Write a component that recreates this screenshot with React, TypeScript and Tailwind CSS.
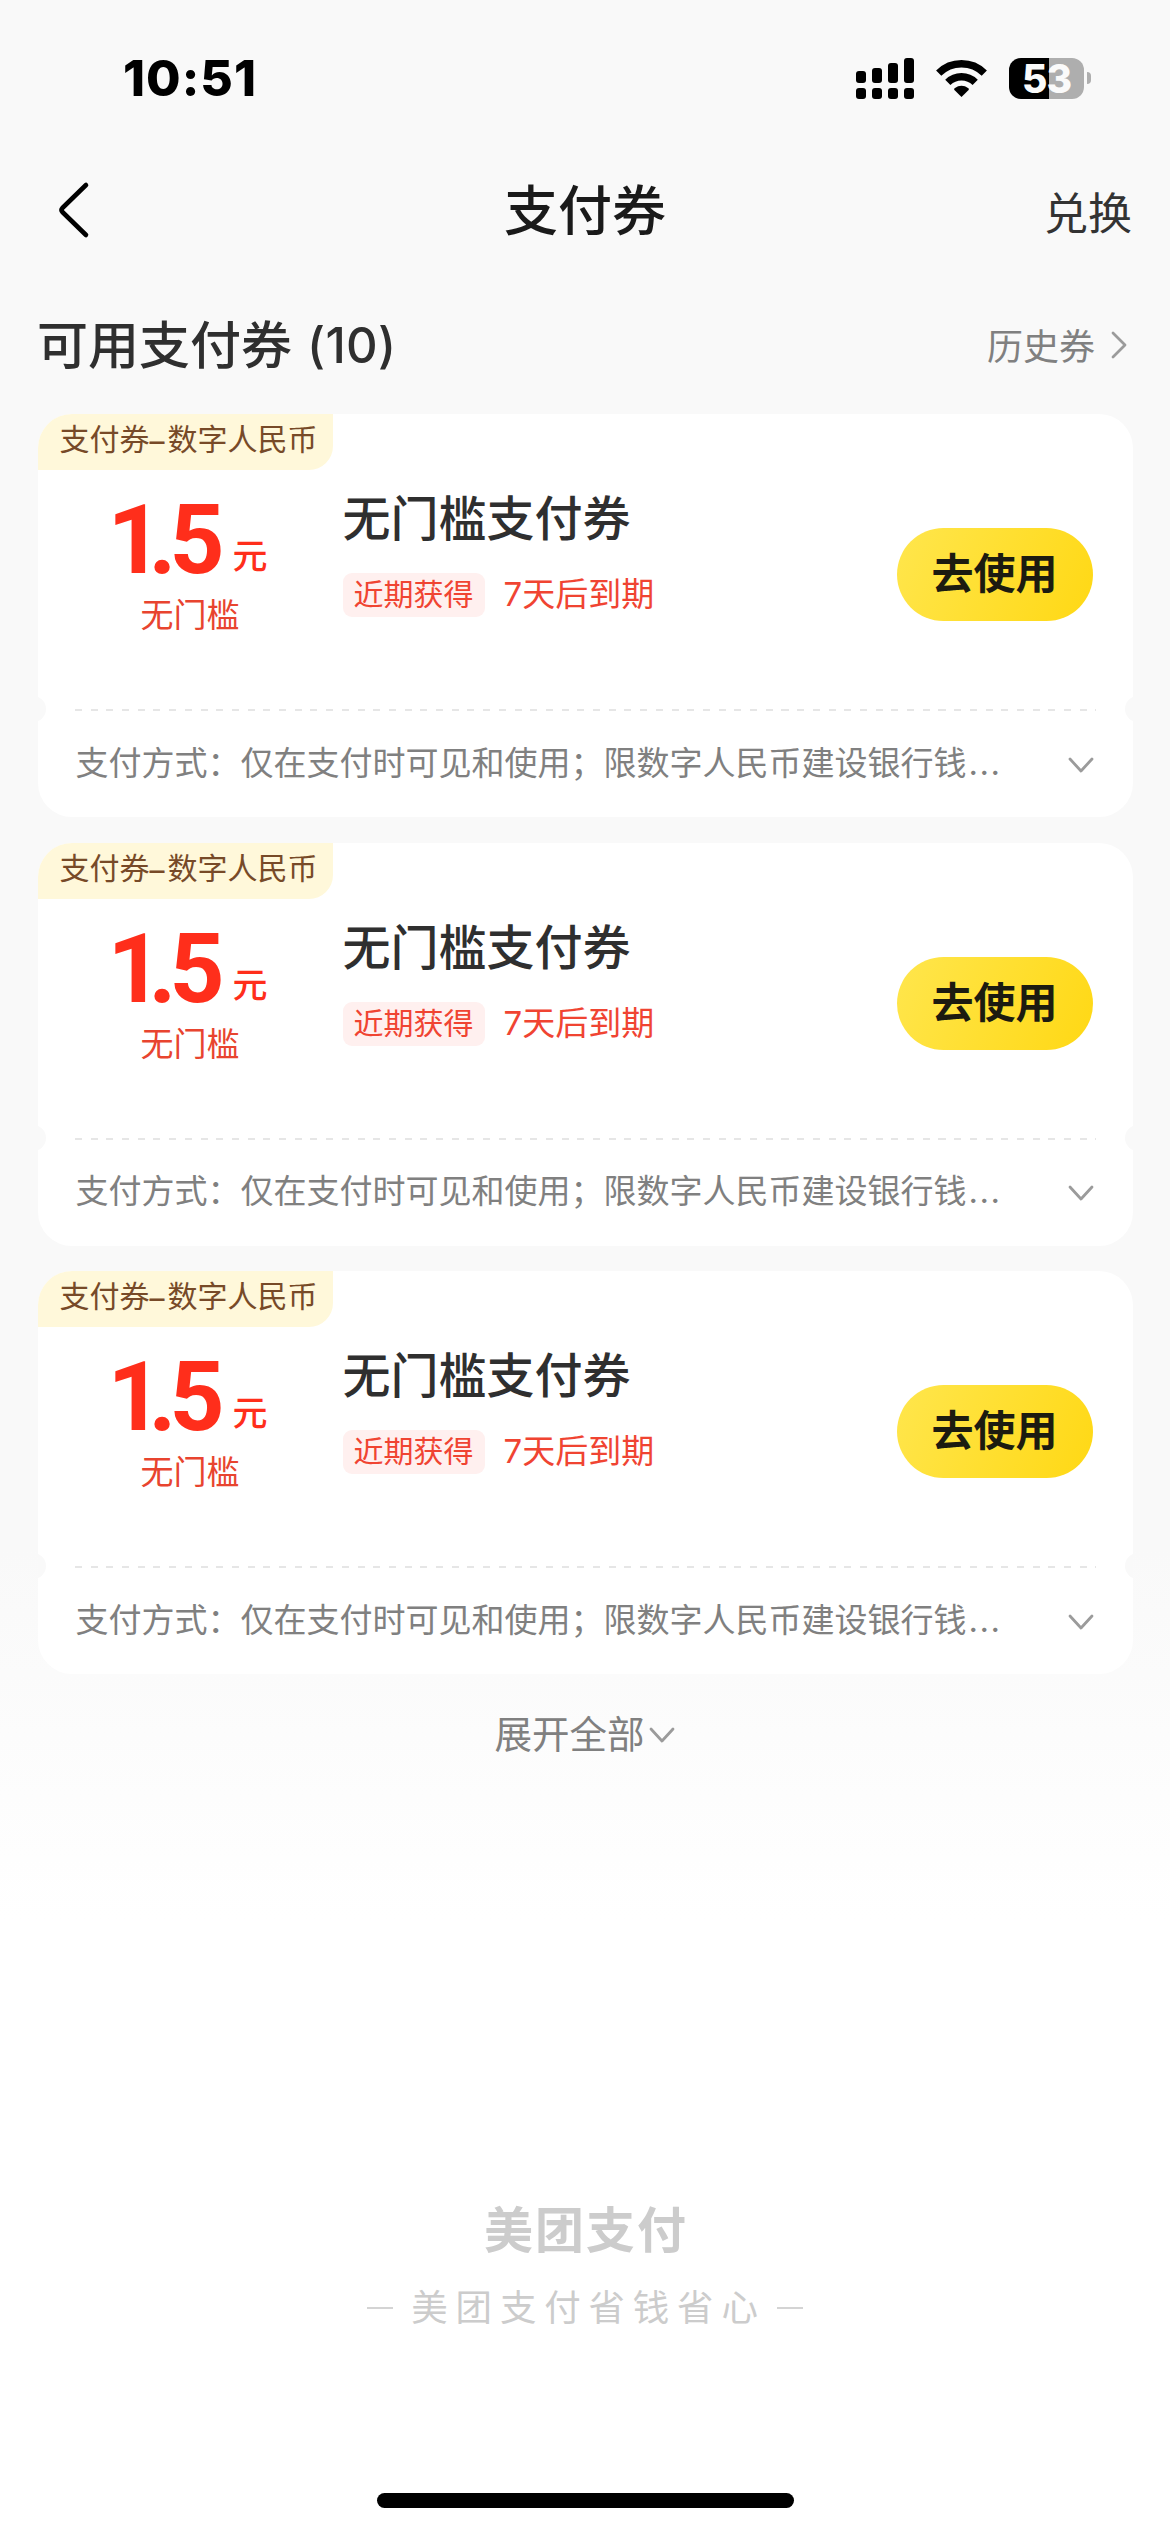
import React from "react";

const CJK = "font-['Noto_Sans_CJK_SC',sans-serif]";

interface Coupon {
  id: number;
  tag: string;
  title: string;
  badge: string;
  expiry: string;
}

const coupons: Coupon[] = [1, 2, 3].map((id) => ({
  id,
  tag: "数字人民币",
  title: "无门槛支付券",
  badge: "近期获得",
  expiry: "天后到期",
}));

function Signal() {
  const tops = [13, 10, 5, 0];
  return (
    <svg width="58" height="41" viewBox="0 0 58 41" fill="#000">
      {tops.map((t, i) => (
        <g key={i}>
          <rect x={i * 16} y={t} width="10" height={25 - t} rx="3" />
          <rect x={i * 16} y="30" width="10" height="11" rx="3" />
        </g>
      ))}
    </svg>
  );
}

function Wifi() {
  return (
    <svg width="51" height="37" viewBox="0 0 51 37" fill="none" stroke="#000" strokeWidth="7.4">
      <path d="M2.7 13.2 A32.4 32.4 0 0 1 48.3 13.2" />
      <path d="M11.8 22.3 A19.5 19.5 0 0 1 39.2 22.3" />
      <path d="M25.5 37 L18.4 29.9 Q17.6 29 18.6 28.2 Q25.5 23.4 32.4 28.2 Q33.4 29 32.6 29.9 Z" fill="#000" stroke="none" />
    </svg>
  );
}

function Battery() {
  return (
    <div className="flex items-center gap-[3px]">
      <div className="flex h-[41px] w-[75px] items-center justify-center rounded-[12px] bg-[linear-gradient(to_right,#000_40px,#aeaeae_40px)] font-['Inter',sans-serif] text-[39px] leading-[41px] font-extrabold text-[#fafafa]">
        <span className="tracking-[-1px]">53</span>
      </div>
      <div className="h-3 w-1 rounded-r-full bg-[#aeaeae]" />
    </div>
  );
}

function ChevronDown() {
  return (
    <svg width="26" height="16" viewBox="0 0 26 16" fill="none" stroke="#9b9b9b" strokeWidth="2.8" strokeLinecap="round" strokeLinejoin="round">
      <path d="M2 2 L13 14 L24 2" />
    </svg>
  );
}

function CouponCard({ c }: { c: Coupon }) {
  return (
    <article className="relative h-[403px] overflow-hidden rounded-[34px] bg-white">
      <div className="flex h-[56px] w-[295px] rounded-br-[24px] bg-[#fff8da] pl-[22px] text-[30px] leading-[47px] whitespace-nowrap text-[#774a28]">
        <span>支付券</span>
        <span className="w-[18px] overflow-visible font-['Inter',sans-serif] leading-[54px]">–</span>
        <span>{c.tag}</span>
      </div>
      <div className="flex h-[239px]">
        <div className="flex w-[305px] flex-col items-center text-[#ff2e1b]">
          <div className="mt-5 flex h-[98px] items-baseline pr-[5px]">
            <span className="font-['Roboto',sans-serif] text-[96px] leading-[100px] font-bold">
              <span className="tracking-[-14px]">1</span>
              <span className="tracking-[-7px]">.</span>
              <span className="tracking-[-10px]">5</span>
            </span>
            <span className="relative -top-[4px] ml-[18px] text-[35px] leading-10 font-medium">元</span>
          </div>
          <div className="mt-[2px] text-[33px] leading-[46px] text-[#e8442f]">无门槛</div>
        </div>
        <div className="flex flex-1 flex-col">
          <h3 className="mt-[17px] text-[48px] leading-[56px] font-medium text-[#2f2f2f]">{c.title}</h3>
          <div className="mt-[29px] flex items-center text-[#f04432]">
            <span className="h-[44px] rounded-[9px] bg-[#fff0ef] px-[11px] text-[30px] leading-[38px]">{c.badge}</span>
            <span className="ml-[19px] pb-[4px] text-[33px] leading-[40px]">
              <span className="font-['Inter',sans-serif]">7</span>
              {c.expiry}
            </span>
          </div>
        </div>
        <button className="mt-[58px] mr-[40px] h-[93px] w-[196px] rounded-full bg-[linear-gradient(115deg,#ffe64d,#ffd814)] pb-[7px] text-[42px] leading-[86px] font-bold text-[#1c1b10]">
          去使用
        </button>
      </div>
      <div className="mx-[37px] h-[2px] bg-[repeating-linear-gradient(to_right,#e6e6e6_0_7px,transparent_7px_15.7px)]" />
      <div className="absolute top-[282px] left-[-18px] size-[26px] rounded-full bg-[#f9f9f9]" />
      <div className="absolute top-[282px] right-[-18px] size-[26px] rounded-full bg-[#f9f9f9]" />
      <div className="flex h-[106px] items-center justify-between pr-[39px] pb-[3px] pl-[38px] text-[33px] leading-[46px] text-[#808080]">
        <p className="flex whitespace-nowrap">
          支付方式：仅在支付时可见和使用；限数字人民币建设银行钱
          <span className="ml-[2px] font-['Inter',sans-serif] leading-[50px] tracking-[1.5px]">...</span>
        </p>
        <span className="pt-[4px]">
          <ChevronDown />
        </span>
      </div>
    </article>
  );
}

export default function App() {
  return (
    <div className={`flex h-[2532px] w-[1170px] flex-col overflow-hidden bg-[linear-gradient(to_bottom,#f9f9f9_1550px,#ffffff_1920px)] ${CJK}`}>
      <header className="flex h-[140px] items-center justify-between pt-4 pr-[79px] pl-[123px]">
        <span className="font-['Inter',sans-serif] text-[50px] leading-[50px] font-extrabold tracking-[1px] text-black">10:51</span>
        <div className="flex items-center">
          <Signal />
          <span className="mr-[22px] ml-[22px]">
            <Wifi />
          </span>
          <Battery />
        </div>
      </header>

      <nav className="grid h-[140px] grid-cols-[1fr_auto_1fr] items-center px-[38px]">
        <svg className="ml-[18px]" width="34" height="58" viewBox="0 0 34 58" fill="none" stroke="#000" strokeWidth="4.6" strokeLinecap="round" strokeLinejoin="round">
          <path d="M30 4 L6.4 27 Q4.6 29 6.4 31 L30 54" />
        </svg>
        <h1 className="-mt-[5px] text-[54px] leading-[70px] font-medium text-[#1a1a1a]">支付券</h1>
        <span className="pt-[2px] text-right text-[44px] leading-[60px] text-[#333]">兑换</span>
      </nav>

      <section className="flex h-[134px] items-center justify-between pr-[42px] pb-[7px] pl-[37px]">
        <h2 className="flex text-[51px] leading-[70px] font-medium text-[#2f2f2f]">
          可用支付券
          <span className="ml-[15px] pt-[4px] font-['Inter',sans-serif] text-[49px] tracking-[0.3px]">(10)</span>
        </h2>
        <div className="flex items-center gap-[15px] text-[36px] leading-[50px] text-[#808080]">
          历史券
          <svg className="mt-[3px]" width="18" height="28" viewBox="0 0 18 28" fill="none" stroke="#9b9b9b" strokeWidth="2.8" strokeLinecap="round" strokeLinejoin="round">
            <path d="M3 2 L15 14 L3 26" />
          </svg>
        </div>
      </section>

      <main className="flex flex-col gap-[25.5px] px-[37.5px]">
        {coupons.map((c) => (
          <CouponCard key={c.id} c={c} />
        ))}
      </main>

      <div className="flex h-[120px] items-center justify-center gap-[4px] pr-[1px] pb-[5px] text-[37.5px] leading-[50px] text-[#808080]">
        展开全部
        <span className="pt-[6px]">
          <ChevronDown />
        </span>
      </div>

      <footer className="mt-auto flex h-[345px] flex-col items-center text-[#cccccc]">
        <div className="pl-[2px] text-[49px] leading-[80px] font-bold tracking-[2px]">美团支付</div>
        <div className="mt-[9px] flex items-center text-[36.5px] leading-[60px] text-[#cccccc]">
          <span className="mt-1 h-[2px] w-[26px] bg-[#d4d4d4]" />
          <span className="ml-[18px] tracking-[7.8px]">美团支付省钱省心</span>
          <span className="mt-1 ml-[11px] h-[2px] w-[26px] bg-[#d4d4d4]" />
        </div>
        <div className="mt-auto mb-[24px] h-[15px] w-[417px] rounded-full bg-black" />
      </footer>
    </div>
  );
}
